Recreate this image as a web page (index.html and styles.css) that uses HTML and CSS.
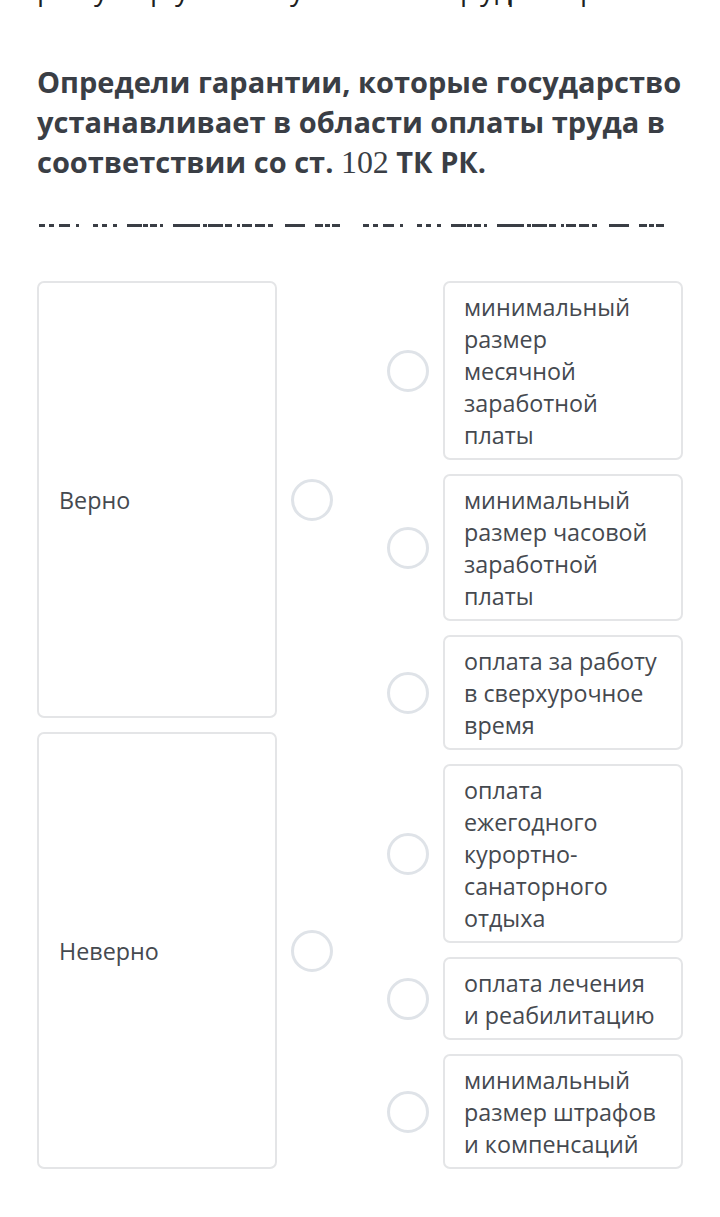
FILE: index.html
```html
<!DOCTYPE html>
<html lang="ru">
<head>
<meta charset="utf-8">
<title>Задание</title>
<link rel="stylesheet" href="styles.css">
</head>
<body>
<div class="page">
  <div class="clip-top">
    <div class="clip-line">
      <span>р</span><span>у</span><span>р</span><span>у</span><span>у</span><span>р</span><span>у</span><span>д</span><span>р</span><span>р</span>
    </div>
  </div>

  <h1 class="question">Определи гарантии, которые государство устанавливает в области оплаты труда в соответствии со ст. <span class="math">102</span> ТК РК.</h1>

  <svg class="cut-line" width="720" height="8" viewBox="0 0 720 8" aria-hidden="true">
    <defs>
      <g id="dash">
        <rect x="39" y="2" width="6" height="3"/>
        <rect x="49" y="2" width="5" height="3"/>
        <rect x="59" y="2" width="11" height="3"/>
        <rect x="76" y="2" width="3" height="3"/>
        <rect x="93" y="2" width="5" height="3"/>
        <rect x="102" y="2" width="5" height="3"/>
        <rect x="113" y="2" width="4" height="3"/>
        <rect x="127" y="2" width="15" height="3"/>
        <rect x="143" y="2" width="5" height="3"/>
        <rect x="150" y="2" width="7" height="3"/>
        <rect x="160" y="2" width="3" height="3"/>
        <rect x="173" y="2" width="27" height="3"/>
        <rect x="203" y="2" width="4" height="3"/>
        <rect x="208" y="2" width="15" height="3"/>
        <rect x="225" y="2" width="7" height="3"/>
        <rect x="237" y="2" width="3" height="3"/>
        <rect x="242" y="2" width="10" height="3"/>
        <rect x="255" y="2" width="10" height="3"/>
        <rect x="268" y="2" width="5" height="3"/>
        <rect x="285" y="2" width="20" height="3"/>
        <rect x="315" y="2" width="8" height="3"/>
        <rect x="325" y="2" width="5" height="3"/>
        <rect x="332" y="2" width="8" height="3"/>
      </g>
    </defs>
    <use href="#dash" fill="#3a3e45"/>
    <use href="#dash" fill="#3a3e45" transform="translate(324 0)"/>
  </svg>

  <div class="match">
    <div class="targets">
      <div class="target">
        <div class="card card-target">Верно</div>
        <span class="dot"></span>
      </div>
      <div class="target">
        <div class="card card-target">Неверно</div>
        <span class="dot"></span>
      </div>
    </div>

    <div class="options">
      <div class="option">
        <span class="dot"></span>
        <div class="card card-option">минимальный размер месячной заработной платы</div>
      </div>
      <div class="option">
        <span class="dot"></span>
        <div class="card card-option">минимальный размер часовой заработной платы</div>
      </div>
      <div class="option">
        <span class="dot"></span>
        <div class="card card-option">оплата за работу в сверхурочное время</div>
      </div>
      <div class="option">
        <span class="dot"></span>
        <div class="card card-option">оплата ежегодного курортно-санаторного отдыха</div>
      </div>
      <div class="option">
        <span class="dot"></span>
        <div class="card card-option">оплата лечения и реабилитацию</div>
      </div>
      <div class="option">
        <span class="dot"></span>
        <div class="card card-option">минимальный размер штрафов и компенсаций</div>
      </div>
    </div>
  </div>
</div>
</body>
</html>
```

FILE: styles.css
```css
* {
  box-sizing: border-box;
}

html, body {
  margin: 0;
  padding: 0;
  background: #ffffff;
}

body {
  font-family: "Open Sans", "Noto Sans", "DejaVu Sans", sans-serif;
  color: #44484e;
}

.page {
  width: 720px;
  padding: 0 37px;
}

.clip-top {
  height: 7px;
  overflow: hidden;
}

.clip-line {
  display: grid;
  grid-template-columns: 57px 56px 25px 115px 170px 20px 15px 12px 73px auto;
  font-weight: 400;
  font-size: 28px;
  line-height: 28px;
  color: #1e1f22;
  margin-top: -25px;
}

.question {
  margin: 55px 0 0;
  font-size: 29px;
  line-height: 40px;
  font-weight: 700;
  color: #3a3e45;
  letter-spacing: 0;
}

.math {
  font-family: "Liberation Serif", "DejaVu Serif", serif;
  font-weight: 400;
  font-size: 1.1em;
  line-height: 1;
}

.cut-line {
  display: block;
  margin: 40px 0 0 -37px;
}

.match {
  margin-top: 51px;
  display: flex;
  justify-content: space-between;
  align-items: stretch;
}

.targets {
  display: flex;
  flex-direction: column;
  gap: 14px;
  width: 296px;
}

.target {
  flex: 1;
  display: flex;
  align-items: center;
  gap: 14px;
}

.target .card {
  align-self: stretch;
  display: flex;
  align-items: center;
}

.options {
  display: flex;
  flex-direction: column;
  gap: 14px;
  width: 296px;
}

.option {
  display: flex;
  align-items: center;
  gap: 14px;
}

.card {
  width: 240px;
  flex: none;
  border: 2px solid #e4e5e7;
  border-radius: 7px;
  background: #ffffff;
  font-size: 23.3px;
  line-height: 32px;
  color: #45494f;
}

.card-target {
  padding: 0 20px;
}

.card-option {
  padding: 7.5px 19px;
}

.dot {
  flex: none;
  width: 42px;
  height: 42px;
  border: 3px solid #dfe3e8;
  border-radius: 50%;
  background: #ffffff;
}
```
